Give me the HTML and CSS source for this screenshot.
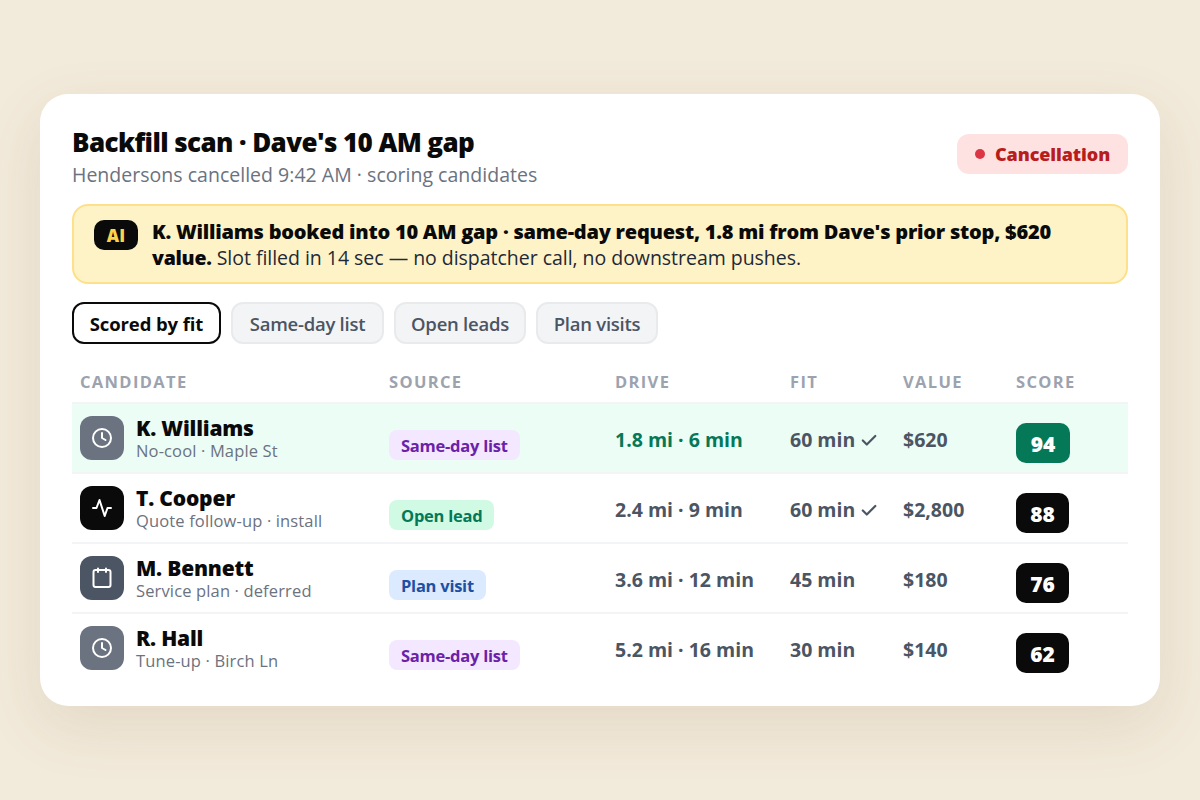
FILE: index.html
```html
<!DOCTYPE html>
<html lang="en">
<head>
  <meta charset="UTF-8">
  <meta name="viewport" content="width=device-width, initial-scale=1.0">
  <title>Backfill scan</title>
  <link rel="stylesheet" href="styles.css">
</head>
<body>

  <main class="card">
    <header class="card-head">
      <div>
        <h1 class="title">Backfill scan · Dave's 10 AM gap</h1>
        <p class="subtitle">Hendersons cancelled 9:42 AM · scoring candidates</p>
      </div>
      <div class="status"><span class="dot"></span><span class="status-text">Cancellation</span></div>
    </header>

    <section class="ai">
      <span class="ai-tag">AI</span>
      <p class="ai-text"><b class="ai-lead">K. Williams booked into 10 AM gap · same-day request, 1.8 mi from Dave's prior stop, $620</b><br><b class="ai-word">value.</b> <span class="ai-rest">Slot filled in 14 sec — no dispatcher call, no downstream pushes.</span></p>
    </section>

    <nav class="chips">
      <span class="chip chip-1 active">Scored by fit</span>
      <span class="chip chip-2">Same-day list</span>
      <span class="chip chip-3">Open leads</span>
      <span class="chip chip-4">Plan visits</span>
    </nav>

    <div class="table">
      <div class="row thead">
        <span>CANDIDATE</span><span>SOURCE</span><span>DRIVE</span><span>FIT</span><span>VALUE</span><span>SCORE</span>
      </div>

      <div class="row best">
        <div class="who">
          <span class="icon gray"><svg viewBox="0 0 24 24"><circle cx="12" cy="12" r="9"/><path d="M12 7v5l3.5 2"/></svg></span>
          <div><div class="name">K. Williams</div><div class="note">No-cool · Maple St</div></div>
        </div>
        <div><span class="tag purple">Same-day list</span></div>
        <div class="num">1.8 mi · 6 min</div>
        <div class="num">60 min<svg class="check" viewBox="0 0 16 14"><path d="M1.8 7.5l4 4L14.3 3"/></svg></div>
        <div class="num">$620</div>
        <div class="score">94</div>
      </div>

      <div class="row">
        <div class="who">
          <span class="icon black"><svg viewBox="0 0 24 24"><path d="M3 12h3.5l3-8 5.2 16 2.8-8H21"/></svg></span>
          <div><div class="name">T. Cooper</div><div class="note">Quote follow-up · install</div></div>
        </div>
        <div><span class="tag green">Open lead</span></div>
        <div class="num">2.4 mi · 9 min</div>
        <div class="num">60 min<svg class="check" viewBox="0 0 16 14"><path d="M1.8 7.5l4 4L14.3 3"/></svg></div>
        <div class="num">$2,800</div>
        <div class="score">88</div>
      </div>

      <div class="row">
        <div class="who">
          <span class="icon slate"><svg viewBox="0 0 24 24"><rect x="3.5" y="4" width="17" height="17" rx="2"/><path d="M8 2.5v3.5M16 2.5v3.5"/></svg></span>
          <div><div class="name">M. Bennett</div><div class="note">Service plan · deferred</div></div>
        </div>
        <div><span class="tag blue">Plan visit</span></div>
        <div class="num">3.6 mi · 12 min</div>
        <div class="num">45 min</div>
        <div class="num">$180</div>
        <div class="score">76</div>
      </div>

      <div class="row">
        <div class="who">
          <span class="icon gray"><svg viewBox="0 0 24 24"><circle cx="12" cy="12" r="9"/><path d="M12 7v5l3.5 2"/></svg></span>
          <div><div class="name">R. Hall</div><div class="note">Tune-up · Birch Ln</div></div>
        </div>
        <div><span class="tag purple">Same-day list</span></div>
        <div class="num">5.2 mi · 16 min</div>
        <div class="num">30 min</div>
        <div class="num">$140</div>
        <div class="score">62</div>
      </div>
    </div>
  </main>

</body>
</html>
```

FILE: styles.css
```css
* {
  box-sizing: border-box;
}
body {
  margin: 0;
  height: 800px;
  display: flex;
  align-items: center;
  justify-content: center;
  background: #f2eadb;
  font-family: "Open Sans", "Noto Sans", sans-serif;
  color: #0a0a0a;
  overflow: hidden;
}
.card {
  width: 1120px;
  height: 612px;
  padding: 32px;
  background: #fff;
  border-radius: 28px;
  box-shadow: 0 20px 60px rgba(120, 90, 40, 0.12);
}

.card-head {
  display: flex;
  justify-content: space-between;
  align-items: center;
  height: 56px;
}
.title {
  margin: 0;
  padding-top: 6px;
  font-size: 26px;
  line-height: 32px;
  font-weight: 800;
  letter-spacing: -0.6px;
}
.subtitle {
  margin: 0;
  padding-top: 3px;
  font-size: 19.5px;
  line-height: 28px;
  color: #6b7280;
  letter-spacing: 0.02px;
}
.status {
  display: flex;
  align-items: center;
  gap: 10px;
  width: 171px;
  height: 40px;
  padding-left: 18px;
  border-radius: 12px;
  background: #fee2e2;
  color: #b91c1c;
  font-size: 18px;
  font-weight: 800;
  white-space: nowrap;
}
.status-text {
  letter-spacing: -0.1px;
}
.dot {
  width: 10px;
  height: 10px;
  border-radius: 50%;
  background: #dc3545;
}

.ai {
  display: flex;
  gap: 14px;
  height: 80px;
  margin-top: 22px;
  padding: 13px 20px;
  border: 2px solid #fde08a;
  border-radius: 16px;
  background: #fef3c7;
}
.ai-tag {
  width: 44px;
  height: 30px;
  margin-top: 1px;
  border-radius: 10px;
  background: #0a0a0a;
  color: #fcd34d;
  font-size: 17px;
  line-height: 32px;
  font-weight: 800;
  text-align: center;
}
.ai-text {
  margin: 0;
  font-size: 19.5px;
  line-height: 26px;
  color: #1f2937;
  white-space: nowrap;
}
.ai-text b {
  color: #0a0a0a;
  font-weight: 800;
}
.ai-lead {
  font-size: 20px;
  letter-spacing: -0.23px;
}
.ai-word {
  letter-spacing: -0.25px;
}
.ai-rest {
  letter-spacing: -0.03px;
}

.chips {
  display: flex;
  gap: 10px;
  margin-top: 18px;
}
.chip {
  height: 42px;
  border: 2px solid #e9eaec;
  border-radius: 12px;
  background: #f3f4f6;
  color: #4b5563;
  font-size: 18.5px;
  line-height: 40px;
  font-weight: 600;
  text-align: center;
  letter-spacing: -0.25px;
  white-space: nowrap;
}
.chip-1 { width: 149px; }
.chip-2 { width: 153px; }
.chip-3 { width: 132px; }
.chip-4 { width: 122px; }
.chip.active {
  border-color: #0a0a0a;
  background: #fff;
  color: #0a0a0a;
  font-weight: 700;
  letter-spacing: -0.1px;
}

.table {
  margin-top: 18px;
}
.row {
  display: grid;
  grid-template-columns: 309px 226px 175px 113px 113px 104px;
  align-items: center;
  height: 70px;
  padding: 0 8px;
  border-bottom: 2px solid #f3f4f6;
}
.row:last-child {
  border-bottom-color: transparent;
}
.row.thead {
  height: 42px;
  color: #9ca3af;
  font-size: 16.5px;
  line-height: 40px;
  font-weight: 700;
  letter-spacing: 1.35px;
}
.row.best {
  background: #ecfdf5;
}
.who {
  display: flex;
  align-items: center;
  gap: 12px;
}
.icon {
  display: flex;
  align-items: center;
  justify-content: center;
  width: 44px;
  height: 44px;
  border-radius: 12px;
  color: #fff;
}
.icon svg {
  width: 24px;
  height: 24px;
}
.icon svg,
.check {
  fill: none;
  stroke: currentColor;
  stroke-width: 2;
  stroke-linecap: round;
  stroke-linejoin: round;
}
.gray { background: #6b7280; }
.black { background: #0a0a0a; }
.slate { background: #4b5563; }
.name {
  font-size: 21px;
  line-height: 24px;
  font-weight: 800;
  letter-spacing: -0.2px;
}
.note {
  font-size: 16.5px;
  line-height: 21px;
  color: #6b7280;
  letter-spacing: 0.14px;
}
.tag {
  display: inline-block;
  height: 30px;
  margin-top: 13px;
  padding: 0 12px;
  border-radius: 8px;
  font-size: 16.5px;
  line-height: 32px;
  font-weight: 700;
  letter-spacing: -0.25px;
}
.purple { background: #f3e8ff; color: #6b21a8; }
.green { background: #d1fae5; color: #047857; }
.blue { background: #dbeafe; color: #1e4fa3; }
.num {
  margin-top: 4px;
  color: #4b5563;
  font-size: 19.5px;
  line-height: 26px;
  font-weight: 700;
}
.best .num:nth-child(3) {
  color: #047857;
}
.check {
  width: 16px;
  height: 14px;
  margin-left: 6px;
  stroke-width: 2.2;
}
.score {
  width: 53px;
  height: 40px;
  margin-top: 10px;
  border-radius: 10px;
  background: #0a0a0a;
  color: #fff;
  font-size: 21px;
  line-height: 42px;
  font-weight: 800;
  text-align: center;
}
.best .score {
  width: 54px;
  background: #047857;
}
```
